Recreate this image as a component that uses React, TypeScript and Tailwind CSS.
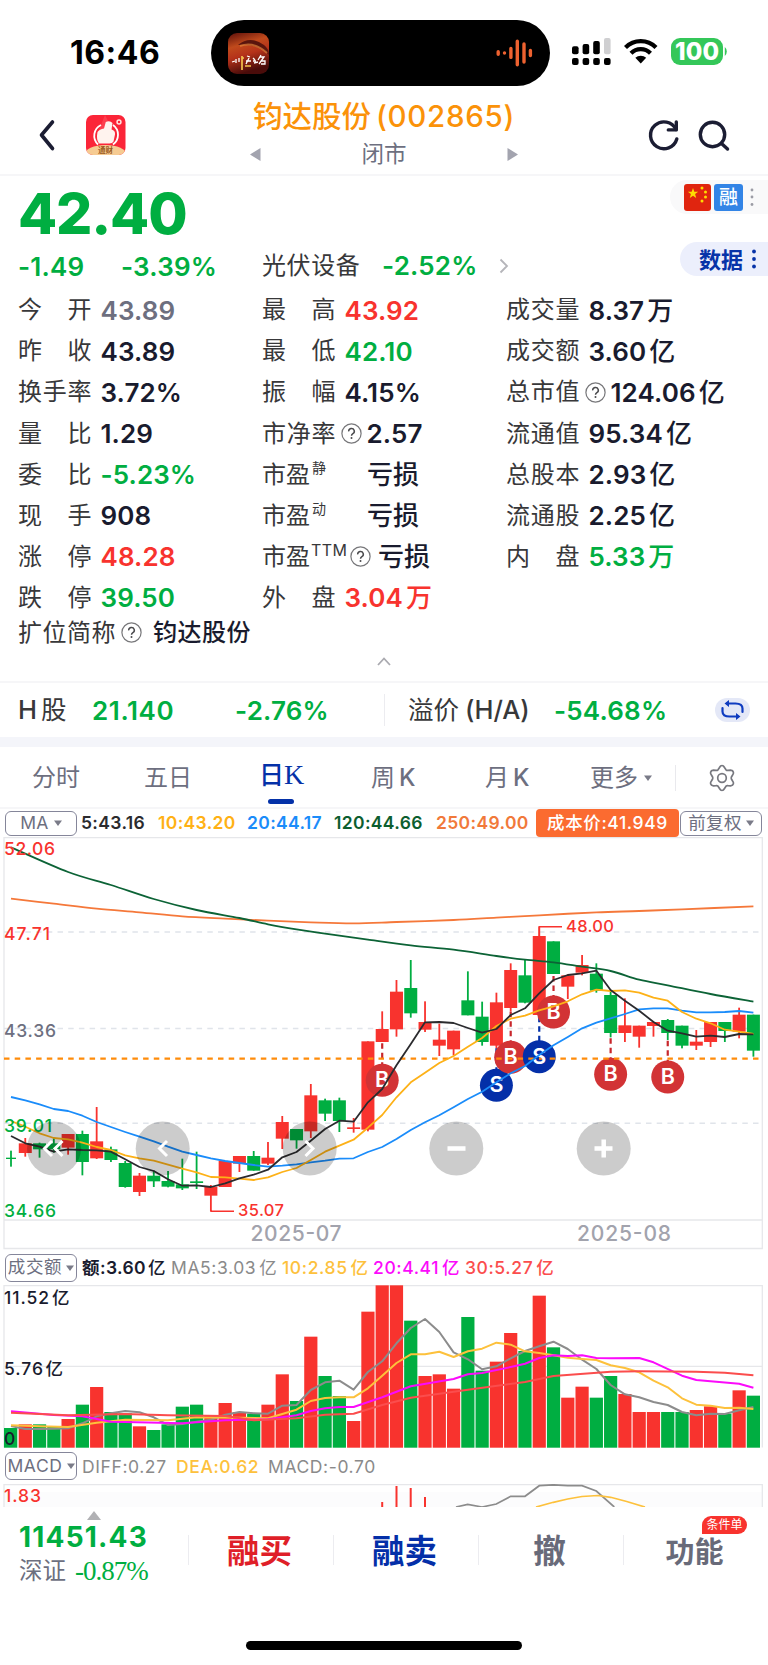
import React from "react";

type Candle = [string, number, number, number, number];
type Pt = [number, number];

const RED = "#f8332e";
const GREEN = "#00ae41";
const STEP = 14.277;
const X0 = 11;
const cx = (i: number) => X0 + i * STEP;

// Candles: colour, high, body top, body bottom, low (thirds of a pixel from the chart top)
const candles: Candle[] = [
  ["G", 962, 983, 987, 1010], ["R", 924, 940, 969, 980], ["G", 938, 940, 958, 983], ["G", 925, 940, 958, 968],
  ["R", 912, 912, 953, 974], ["G", 902, 912, 996, 1036], ["R", 831, 934, 985, 987], ["G", 950, 958, 990, 996],
  ["G", 993, 999, 1071, 1073], ["R", 1029, 1037, 1086, 1098], ["G", 1022, 1037, 1054, 1071], ["G", 1023, 1053, 1070, 1072],
  ["G", 986, 1063, 1075, 1080], ["G", 965, 1054, 1059, 1077], ["R", 1065, 1070, 1097, 1143], ["R", 993, 993, 1071, 1071],
  ["R", 978, 978, 1001, 1026], ["G", 963, 978, 1022, 1022], ["R", 936, 983, 1001, 1005], ["R", 858, 876, 926, 957],
  ["G", 897, 897, 931, 956], ["R", 762, 796, 904, 924], ["G", 806, 811, 851, 873], ["G", 803, 811, 873, 906],
  ["R", 864, 892, 897, 908], ["R", 634, 634, 899, 904], ["R", 544, 597, 636, 636], ["R", 450, 485, 598, 620],
  ["G", 390, 474, 550, 563], ["R", 514, 576, 599, 606], ["R", 581, 629, 647, 678], ["R", 602, 602, 658, 676],
  ["G", 424, 511, 556, 556], ["G", 515, 560, 636, 647], ["R", 488, 517, 647, 655], ["R", 400, 420, 534, 545],
  ["G", 390, 436, 518, 520], ["R", 290, 318, 555, 560], ["G", 334, 334, 432, 432], ["R", 433, 436, 470, 507],
  ["R", 375, 405, 428, 436], ["G", 400, 431, 482, 488], ["G", 486, 495, 609, 622], ["R", 505, 586, 609, 636],
  ["R", 587, 587, 620, 653], ["R", 575, 576, 588, 620], ["G", 567, 570, 609, 630], ["G", 587, 587, 647, 655],
  ["R", 600, 635, 647, 660], ["R", 576, 576, 636, 651], ["G", 576, 576, 603, 636], ["R", 533, 554, 605, 625],
  ["G", 554, 554, 662, 680],
];

const ma5 = [918, 940, 950, 965, 958, 960, 961, 965, 988, 1011, 1023, 1048, 1067, 1066, 1071, 1060, 1045, 1034, 1019, 982, 966, 932, 897, 872, 875, 817, 777, 706, 642, 577, 576, 579, 594, 608, 597, 555, 535, 490, 450, 435, 430, 422, 480, 512, 542, 576, 602, 610, 620, 617, 621, 612, 613];
const ma10 = [873, 890, 910, 924, 928, 938, 951, 960, 976, 985, 992, 1004, 1016, 1027, 1041, 1042, 1046, 1050, 1042, 1026, 1014, 990, 965, 947, 929, 893, 855, 802, 757, 728, 699, 678, 650, 624, 588, 566, 557, 541, 529, 514, 493, 479, 483, 481, 488, 503, 512, 546, 566, 580, 599, 605, 612];
const ma20 = [801, 811, 823, 837, 843, 857, 876, 891, 906, 920, 934, 950, 965, 975, 985, 993, 999, 1005, 1010, 1007, 1003, 997, 992, 986, 985, 966, 951, 927, 900, 877, 856, 832, 807, 785, 757, 730, 708, 675, 646, 621, 595, 578, 565, 552, 538, 535, 535, 542, 547, 547, 546, 543, 548];
const ma120: Pt[] = [[0, 52], [4, 126], [7, 165], [10, 207], [13, 240], [16, 264], [18, 283], [20, 298], [23, 317], [25, 329], [28, 346], [31, 359], [34, 378], [36, 389], [38, 397], [40, 410], [42, 423], [44, 449], [46, 466], [49, 492], [52, 515]];
const ma250: Pt[] = [[0, 206], [3, 221], [6, 236], [9, 247], [12, 259], [15, 266], [18, 272], [21, 277], [24, 280], [27, 276], [31, 270], [34, 263], [37, 256], [41, 247], [44, 243], [47, 238], [52, 229]];

const volTops = [549, 538, 538, 545, 522, 479, 426, 501, 505, 544, 555, 538, 485, 479, 513, 474, 501, 506, 479, 388, 468, 275, 393, 453, 528, 200, 121, 121, 227, 393, 388, 431, 216, 377, 350, 264, 318, 152, 307, 458, 425, 458, 393, 447, 501, 501, 501, 501, 495, 484, 506, 436, 452];
const vol5 = [543, 552, 552, 551, 550, 535, 514, 505, 498, 502, 517, 540, 537, 530, 524, 509, 501, 505, 506, 482, 480, 435, 412, 407, 434, 381, 349, 295, 249, 222, 261, 322, 343, 373, 364, 340, 318, 304, 290, 312, 344, 372, 420, 448, 457, 471, 480, 501, 511, 506, 507, 496, 486];
const vol10: Pt[] = [[0, 541], [2, 544], [4, 546], [6, 533], [8, 524], [11, 526], [13, 517], [16, 518], [18, 520], [20, 494], [21, 468], [22, 459], [23, 457], [24, 457], [25, 430], [26, 392], [27, 354], [28, 328], [29, 328], [30, 320], [31, 336], [32, 319], [33, 311], [34, 293], [35, 299], [36, 319], [37, 324], [38, 331], [39, 338], [40, 342], [41, 345], [42, 361], [43, 369], [44, 382], [45, 407], [46, 427], [47, 460], [48, 479], [49, 482], [50, 489], [51, 488], [52, 492]];
const vol20: Pt[] = [[0, 499], [3, 510], [5, 514], [6, 522], [7, 530], [8, 531], [12, 535], [15, 526], [18, 523], [20, 511], [21, 498], [22, 490], [23, 486], [24, 486], [26, 457], [28, 424], [31, 402], [32, 388], [33, 384], [35, 366], [36, 356], [37, 339], [38, 331], [39, 333], [40, 331], [41, 339], [42, 340], [44, 339], [45, 352], [47, 392], [48, 405], [51, 416], [52, 428]];
const vol30: Pt[] = [[0, 503], [4, 511], [8, 507], [11, 511], [15, 513], [17, 526], [20, 520], [22, 509], [24, 506], [26, 480], [28, 458], [32, 434], [36, 411], [38, 393], [42, 380], [44, 379], [48, 380], [50, 383], [52, 391]];

const seq = (a: number[]): Pt[] => a.map((y, i) => [i, y]);
const line = (p: Pt[]) => p.map(([i, y]) => `${cx(i).toFixed(1)},${(y / 3).toFixed(1)}`).join(" ");

// Smooth path through sparse points
function curve(p: Pt[]) {
  const q = p.map(([i, y]) => [cx(i), y / 3]);
  let d = `M${q[0][0]} ${q[0][1]}`;
  for (let k = 0; k < q.length - 1; k++) {
    const a = q[Math.max(0, k - 1)];
    const b = q[k];
    const c = q[k + 1];
    const e = q[Math.min(q.length - 1, k + 2)];
    d += `C${b[0] + (c[0] - a[0]) / 6} ${b[1] + (c[1] - a[1]) / 6} ${c[0] - (e[0] - b[0]) / 6} ${c[1] - (e[1] - b[1]) / 6} ${c[0]} ${c[1]}`;
  }
  return d;
}

const SANS = "Inter, 'Noto Sans CJK SC', sans-serif";

function Txt(p: { x: number; y: number; w?: number; size: number; fill: string; weight?: number; anchor?: "start" | "middle"; children: string }) {
  return (
    <text x={p.x} y={p.y} fontSize={p.size} fill={p.fill} fontWeight={p.weight ?? 500} fontFamily={SANS} textAnchor={p.anchor ?? "start"} textLength={p.w}>
      {p.children}
    </text>
  );
}

function Help() {
  return (
    <svg width="21" height="21" viewBox="0 0 21 21" fill="none" className="shrink-0">
      <circle cx="10.5" cy="10.5" r="9.6" stroke="#77777a" strokeWidth="1.2" />
      <path d="M7.7 8.4a2.8 2.8 0 1 1 4.2 2.3c-.9.6-1.4 1-1.4 2.1" stroke="#4a4a4d" strokeWidth="1.5" />
      <circle cx="10.5" cy="15" r="1" fill="#4a4a4d" />
    </svg>
  );
}

function Label({ text }: { text: string }) {
  return (
    <div className="flex w-[73.500px] shrink-0 justify-between text-[24px] text-[#38383a]">
      {text.split("").map((c, i) => (
        <span key={i}>{c}</span>
      ))}
    </div>
  );
}

const tone: Record<string, string> = {
  k: "text-[#191b2e]",
  g: "text-[#00ae41]",
  r: "text-[#f8332e]",
  s: "text-[#6d6f7f]",
};

function Value({ v, t = "k" }: { v: string; t?: string }) {
  const m = v.match(/^([-\d.%]*)(.*)$/)!;
  return (
    <div className={"flex items-center whitespace-nowrap text-[26px] " + tone[t]}>
      {m[1] && <span className="font-semibold tracking-[0.100px]">{m[1]}</span>}
      {m[2] && <span className={m[1] ? "ml-[3px] font-medium" : "font-medium"}>{m[2]}</span>}
    </div>
  );
}

function Stat({ l, v, t, help }: { l: string; v: string; t?: string; help?: boolean }) {
  return (
    <div className="flex h-[41.1px] items-center">
      <Label text={l} />
      {help ? (
        <div className="mr-[5px] ml-[5px] flex">
          <Help />
        </div>
      ) : (
        <div className="w-[9px]" />
      )}
      <Value v={v} t={t} />
    </div>
  );
}

function PE({ sup, v, help }: { sup: string; v: string; help?: boolean }) {
  return (
    <div className="flex h-[41.1px] items-center">
      <div className="w-[48px] text-[24px] whitespace-nowrap text-[#38383a]">市盈</div>
      <div className={help ? "mr-[5px] w-[33px] pb-[13px] pl-[1px] text-[16px] leading-none tracking-[0.4px] text-[#38383a]" : "mr-[35px] w-[22px] pb-[13px] pl-[2px] text-[14px] leading-none text-[#38383a]"}>{sup}</div>
      {help && (
        <div className="mr-[7px] ml-[2px] flex">
          <Help />
        </div>
      )}
      <Value v={v} />
    </div>
  );
}

function StatusBar() {
  return (
    <div className="flex h-[86px] items-start">
      <div className="mt-[32px] ml-[70px] w-[141px] text-[32px] leading-[42px] font-bold tracking-[0.5px] text-black">16:46</div>
      <div className="mt-[20px] flex h-[66px] w-[339px] items-center justify-between rounded-full bg-black pr-[17px] pl-[17px]">
        <svg width="41" height="41" viewBox="0 0 41 41">
          <defs>
            <linearGradient id="poster" x1="0" y1="0" x2="0.3" y2="1">
              <stop offset="0" stopColor="#5c0f0a" />
              <stop offset="0.35" stopColor="#c04a1c" />
              <stop offset="0.6" stopColor="#b5321a" />
              <stop offset="1" stopColor="#4a0c0a" />
            </linearGradient>
            <clipPath id="pclip">
              <rect width="41" height="41" rx="9" />
            </clipPath>
          </defs>
          <g clipPath="url(#pclip)">
            <rect width="41" height="41" fill="url(#poster)" />
            <path d="M10 12Q22 2 36 12Q41 16 41 22Q30 10 10 12Z" fill="#5a150d" />
            <path d="M12 13Q26 8 39 20" stroke="#e0813a" strokeWidth="2" fill="none" opacity="0.7" />
          </g>
          <path d="M4 29l3-1M8 26v4M11 25v4M19 23l3 1M18 28h5M21 25l-3 6M25 25l2 2M25 28l3 0M26 30l4-1M33 22l-3 5M32 24h4l-5 7M33 28h4v3h-4" stroke="#fff" strokeWidth="1.3" fill="none" />
          <path d="M14 23v14M14 25h2M17 33h6" stroke="#f3c24d" strokeWidth="1.7" />
        </svg>
        <svg width="37" height="28" viewBox="0 0 37 28" stroke="#ee6230" strokeWidth="3.4" strokeLinecap="round">
          <path d="M2.2 12.7v2.6M8.5 13.9v.2M14.9 9.5v8.9M21.3 2.3v23.4M28 5v18M34.4 11.5v5" />
        </svg>
      </div>
      <svg width="160" height="30" viewBox="0 0 160 30" className="mt-[37px] ml-[20px]">
        <g fill="#000">
          <rect x="2" y="9.300" width="6.600" height="8" rx="2" />
          <rect x="12.600" y="7" width="6.600" height="10.300" rx="2" />
          <rect x="23.200" y="4" width="6.600" height="13.300" rx="2" />
          <rect x="34" y="1" width="6.600" height="16.300" rx="2" fill="#cfcfd1" />
          <rect x="2" y="21" width="6.600" height="7" rx="2" />
          <rect x="12.600" y="21" width="6.600" height="7" rx="2" />
          <rect x="23.200" y="21" width="6.600" height="7" rx="2" />
          <rect x="34" y="21" width="6.600" height="7" rx="2" />
        </g>
        <g fill="none" stroke="#000" strokeWidth="4.200">
          <path d="M55.500 10.500a21.500 21.500 0 0 1 30.500 0" />
          <path d="M61 16.200a13.700 13.700 0 0 1 19.500 0" />
        </g>
        <path d="M65.300 20.800a8 8 0 0 1 10.900 0L70.750 26.500Z" fill="#000" />
        <rect x="101" y="1" width="52" height="27" rx="9" fill="#34c759" />
        <path d="M154.800 10v9q2-1.500 2-4.500t-2-4.500Z" fill="#34c759" />
        <text x="127" y="23.200" textAnchor="middle" fontSize="24" fontWeight="800" fill="#fff" fontFamily={SANS} textLength="44">100</text>
      </svg>
    </div>
  );
}

function Header() {
  return (
    <div className="flex h-[90px] border-b-2 border-[#f6f6f8]">
      <svg width="90" height="60" viewBox="0 0 90 60" className="mt-[19px] ml-[37px]">
        <path d="M15.500 17L4.500 30L15.500 43.500" fill="none" stroke="#1b1d33" strokeWidth="3.600" strokeLinecap="round" strokeLinejoin="round" />
        <defs>
          <clipPath id="lc">
            <rect x="49" y="10" width="39.500" height="40" rx="7" />
          </clipPath>
        </defs>
        <g clipPath="url(#lc)">
          <rect x="49" y="10" width="40" height="40" fill="#fb2538" />
          <path d="M68 10l-8 20h18Z" fill="#ff5a64" opacity="0.5" />
          <ellipse cx="68.500" cy="49.500" rx="21" ry="9.500" fill="#f6cb92" />
        </g>
        <g transform="translate(1 0)">
          <path d="M60 39.500a12 12 0 0 1 3-19.500M75 20a12 12 0 0 1 0 19.500" stroke="#fff" strokeWidth="1.800" fill="none" />
          <path d="M59.500 27q2-3 6.500-3.500l1.800-6.500q4-2 6.700 1l-1 6.500q4 1 3.500 5l-1.500 7q-1 2-4 2h-10.500q-3-4-1.500-11.500Z" fill="#fff3ee" />
          <circle cx="81" cy="17" r="2.700" fill="#ffe3e0" />
          <circle cx="81" cy="17" r="1.200" fill="#fb2538" />
          <text x="67.500" y="48" textAnchor="middle" fontSize="7.500" fontWeight="700" fill="#9a5a20" fontFamily={SANS}>通财</text>
        </g>
      </svg>
      <div className="ml-[123px] flex w-[268px] flex-col items-center">
        <div className="mt-[10px] text-[29.500px] leading-[40px] whitespace-nowrap text-[#fb9209]">
          <span className="font-medium">钧达股份</span>
          <span className="ml-[5px] font-medium tracking-[0.700px]">(002865)</span>
        </div>
        <div className="mt-[2px] flex h-[32px] w-[268px] items-center justify-between">
          <svg width="11" height="13" viewBox="0 0 11 13"><path d="M10.500 0v13L0 6.500Z" fill="#a3a4af" /></svg>
          <div className="text-[22.500px] leading-[30px] text-[#6d6f7f]">闭市</div>
          <svg width="11" height="13" viewBox="0 0 11 13"><path d="M.5 0v13L11 6.500Z" fill="#a3a4af" /></svg>
        </div>
      </div>
      <svg width="86" height="40" viewBox="0 0 86 40" className="mt-[29px] ml-[128px]" fill="none" stroke="#1b1d33" strokeWidth="3.400" strokeLinecap="round">
        <path d="M30 14.500A13.400 13.400 0 1 0 30.800 24" />
        <path d="M30.300 7v7.900h-8" strokeLinejoin="round" />
        <circle cx="66.500" cy="19.500" r="12.200" />
        <path d="M75.500 28.500L81.500 34" />
      </svg>
    </div>
  );
}

function Quote() {
  return (
    <div className="relative h-[505px]">
      <div className="flex h-[67px]">
        <div className="mt-[8px] ml-[18px] text-[57px] leading-[60px] font-extrabold tracking-[-1.200px] text-[#00ae41]">42.40</div>
      </div>
      <div className="flex h-[46px] items-center text-[26px] font-semibold text-[#00ae41]">
        <div className="ml-[18px] w-[103px] tracking-[0.200px]">-1.49</div>
        <div className="w-[141px] tracking-[0.200px]">-3.39%</div>
        <div className="w-[120px] text-[24px] font-normal tracking-[0.600px] whitespace-nowrap text-[#38383a]">光伏设备</div>
        <div className="w-[117px] pb-[2px] tracking-[0.200px]">-2.52%</div>
        <svg width="10" height="16" viewBox="0 0 10 16" fill="none" stroke="#b5b5ba" strokeWidth="1.800"><path d="M1.500 1.500L8 8L1.500 14.500" /></svg>
      </div>
      <div className="mt-[0.700px] flex pl-[18px]">
        <div className="w-[244px]">
          <Stat l="今 开" v="43.89" t="s" />
          <Stat l="昨 收" v="43.89" />
          <Stat l="换手率" v="3.72%" />
          <Stat l="量 比" v="1.29" />
          <Stat l="委 比" v="-5.23%" t="g" />
          <Stat l="现 手" v="908" />
          <Stat l="涨 停" v="48.28" t="r" />
          <Stat l="跌 停" v="39.50" t="g" />
        </div>
        <div className="w-[244px]">
          <Stat l="最 高" v="43.92" t="r" />
          <Stat l="最 低" v="42.10" t="g" />
          <Stat l="振 幅" v="4.15%" />
          <Stat l="市净率" v="2.57" help />
          <PE sup="静" v="亏损" />
          <PE sup="动" v="亏损" />
          <PE sup="TTM" v="亏损" help />
          <Stat l="外 盘" v="3.04万" t="r" />
        </div>
        <div>
          <Stat l="成交量" v="8.37万" />
          <Stat l="成交额" v="3.60亿" />
          <Stat l="总市值" v="124.06亿" help />
          <Stat l="流通值" v="95.34亿" />
          <Stat l="总股本" v="2.93亿" />
          <Stat l="流通股" v="2.25亿" />
          <Stat l="内 盘" v="5.33万" t="g" />
        </div>
      </div>
      <div className="-mt-[1.500px] flex h-[32px] items-center pl-[18px] text-[24px]">
        <div className="w-[103px] tracking-[0.500px] text-[#38383a]">扩位简称</div>
        <Help />
        <div className="ml-[11px] font-medium tracking-[0.500px] text-[#191b2e]">钧达股份</div>
      </div>
      <div className="flex justify-center pt-[8px]">
        <svg width="14" height="9" viewBox="0 0 14 9" fill="none" stroke="#aaaab0" strokeWidth="1.800"><path d="M1 8L7 1.500L13 8" /></svg>
      </div>
      <div className="absolute top-[4px] right-0 flex h-[34px] w-[98px] items-center rounded-l-full bg-[#f9f9fa] pl-[14px]">
        <svg width="27" height="27" viewBox="0 0 27 27">
          <rect width="27" height="27" rx="3" fill="#e0250f" />
          <path d="M9 4l1.300 3.700h3.900l-3.100 2.400 1.100 3.800L9 11.700l-3.200 2.200 1.100-3.800-3.100-2.400h3.900Z" fill="#fddc02" />
          <g fill="#fddc02"><circle cx="18" cy="4" r="1.500" /><circle cx="21.500" cy="8" r="1.500" /><circle cx="21.500" cy="13" r="1.500" /><circle cx="18" cy="17" r="1.500" /></g>
        </svg>
        <div className="ml-[3px] flex h-[27px] w-[29px] items-center justify-center rounded-[3px] bg-[#3284e6] text-[19px] leading-none font-medium text-white">融</div>
        <svg width="4" height="20" viewBox="0 0 4 20" className="ml-[7px]" fill="#9b9ca5"><circle cx="2" cy="3" r="1.400" /><circle cx="2" cy="10" r="1.400" /><circle cx="2" cy="17.500" r="1.400" /></svg>
      </div>
      <div className="absolute top-[66px] right-0 flex h-[34px] w-[88px] items-center rounded-l-full bg-[#eceffc] pl-[19px] text-[22px] leading-none font-bold text-[#0733a8]">
        <span className="pt-[2px]">数据</span>
        <svg width="4" height="20" viewBox="0 0 4 20" className="ml-[9px]" fill="#0733a8"><circle cx="2" cy="2.500" r="1.900" /><circle cx="2" cy="10" r="1.900" /><circle cx="2" cy="17.500" r="1.900" /></svg>
      </div>
    </div>
  );
}

function HShare() {
  return (
    <div className="flex h-[56px] items-center border-t-2 border-[#f6f6f8] text-[26px] font-semibold text-[#00ae41]">
      <div className="ml-[18px] w-[74px] text-[25.500px] font-medium whitespace-nowrap text-[#38383a]">H<span className="ml-[4px] font-normal">股</span></div>
      <div className="w-[143px] tracking-[0.600px]">21.140</div>
      <div className="w-[149px] tracking-[0.200px]">-2.76%</div>
      <div className="h-[32px] w-px bg-[#ececf0]" />
      <div className="ml-[23px] w-[146px] text-[25.500px] font-medium whitespace-nowrap text-[#38383a]"><span className="font-normal">溢价</span><span className="ml-[6px]">(H/A)</span></div>
      <div className="w-[161px] tracking-[0.200px]">-54.68%</div>
      <svg width="35" height="24" viewBox="0 0 35 24" fill="none">
        <rect width="35" height="24" rx="12" fill="#e4e8f7" />
        <path d="M12 5.500H20.500Q27.500 5.500 27.500 10.500V14M23 18.500H14.500Q7.500 18.500 7.500 13.500V10" stroke="#0f3cc0" strokeWidth="2.200" strokeLinecap="round" />
        <path d="M14 2V9L9.500 5.500ZM21 15V22L25.500 18.500Z" fill="#0f3cc0" />
      </svg>
    </div>
  );
}

const Caret = ({ c = "" }: { c?: string }) => (
  <svg width="8" height="6" viewBox="0 0 8 6" className={c}><path d="M0 .5H8L4 6Z" fill="#7a7b88" /></svg>
);

function Tabs() {
  return (
    <div className="flex h-[62px] border-b-2 border-[#f6f6f8] text-[24px] text-[#6d6f7f]">
      <div className="mt-[13px] ml-[32px] w-[112px] leading-[36px]">分时</div>
      <div className="mt-[13px] w-[115px] leading-[36px]">五日</div>
      <div className="mt-[9px] w-[112px] text-[25px] font-medium text-[#0431a8]">
        <div className="flex leading-[38px]">日<span className="font-['Liberation_Serif'] text-[28px]">K</span></div>
        <div className="mt-[5px] ml-[9px] h-[5px] w-[26px] rounded-full bg-[#0431a8]" />
      </div>
      <div className="mt-[13px] w-[114px] leading-[36px]">周<span className="ml-[4px] font-medium">K</span></div>
      <div className="mt-[13px] w-[105px] leading-[36px]">月<span className="ml-[4px] font-medium">K</span></div>
      <div className="mt-[13px] flex h-[36px] w-[85px] items-center leading-[36px]">更多<Caret c="ml-[6px]" /></div>
      <div className="mt-[18px] h-[26px] w-px bg-[#e9e9ed]" />
      <svg width="28" height="28" viewBox="0 0 28 28" fill="none" stroke="#77787f" strokeWidth="1.700" strokeLinejoin="round" className="mt-[17px] ml-[32px]">
        <path d="M14 1.500Q15.500 1.500 16.500 3.500L18 5.800Q18.800 6.600 20 6.400L22.600 6.200Q25 6.500 25.400 8.200Q25.700 9.500 24.600 11L23.400 13Q23 14 23.400 15L24.600 17Q25.700 18.500 25.400 19.800Q25 21.500 22.600 21.800L20 21.600Q18.800 21.400 18 22.200L16.500 24.500Q15.500 26.500 14 26.500Q12.500 26.500 11.500 24.500L10 22.200Q9.200 21.400 8 21.600L5.400 21.800Q3 21.500 2.600 19.800Q2.300 18.500 3.400 17L4.600 15Q5 14 4.600 13L3.400 11Q2.300 9.500 2.600 8.200Q3 6.500 5.400 6.200L8 6.400Q9.200 6.600 10 5.800L11.500 3.500Q12.500 1.500 14 1.500Z" />
        <circle cx="14" cy="14" r="4.300" />
      </svg>
    </div>
  );
}

function MaRow() {
  return (
    <div className="flex h-[28px] items-center text-[17.500px] font-semibold tracking-[0.350px] whitespace-nowrap">
      <div className="mr-[4px] ml-[5px] flex h-[25px] w-[72px] items-center justify-center rounded-[6px] border-[1.500px] border-[#85869a] font-normal text-[#6d6f7f]">MA<Caret c="ml-[5px]" /></div>
      <div className="w-[77px] text-[#2b2b2e]">5:43.16</div>
      <div className="w-[89px] text-[#ffb114]">10:43.20</div>
      <div className="w-[87px] text-[#1a8cfa]">20:44.17</div>
      <div className="w-[102px] text-[#0c5e2f]">120:44.66</div>
      <div className="w-[100px] text-[#f1793a]">250:49.00</div>
      <div className="flex h-[28px] w-[143px] items-center justify-center rounded-[4px] bg-[#fb6b30] font-medium tracking-[0.600px] text-white">成本价:41.949</div>
      <div className="ml-[1px] flex h-[25px] w-[82px] items-center justify-center rounded-[6px] border-[1.500px] border-[#85869a] font-normal text-[#6d6f7f]">前复权<Caret c="ml-[4px]" /></div>
    </div>
  );
}

const markers: [string, number, number, number][] = [
  ["S", 34, 766, 655], ["B", 35, 682, 545], ["S", 37, 680, 560], ["B", 26, 751, 640],
  ["B", 38, 546, 438], ["B", 42, 733, 625], ["B", 46, 741, 632],
];

function PriceChart() {
  return (
    <svg width="768" height="413" viewBox="0 0 768 413" className="block">
      <g transform="translate(0,-7)">
        <path d="M4 412V7.500H762.300V418.500H4ZM4 390H762" fill="none" stroke="#e6e7ea" strokeWidth="1.300" />
        <path d="M4 102H762M4 198.500H762M4 293.300H762" stroke="#e0e4ea" strokeWidth="1.600" strokeDasharray="5.500 5.200" />
        {candles.map(([c, h, t, b, l], i) => (
          <g key={i} fill={c === "R" ? RED : GREEN}>
            <rect x={cx(i) - 0.9} y={h / 3} width="1.800" height={(l - h) / 3} />
            <rect x={i === 0 ? 6 : cx(i) - 6.500} y={t / 3} width={i === 0 ? 10 : 13} height={(b - t) / 3} />
          </g>
        ))}
        <path d="M211 380V381.200H234M539.300 108V96.700H562" fill="none" stroke={RED} strokeWidth="1.500" />
        {markers.map(([k, i, y, s]) => (
          <g key={`${k}${i}`}>
            <path d={`M${cx(i)} ${s / 3}V${y / 3 - 14}`} stroke={k === "B" ? "#c8262b" : "#0431a8"} strokeWidth="2.200" strokeDasharray="5.500 4" />
            <circle cx={cx(i)} cy={y / 3} r="16.500" fill={k === "B" ? "#d23335" : "#042fa8"} />
          </g>
        ))}
        <path d="M4 228.700H762" stroke="#ff8c0a" strokeWidth="2.200" strokeDasharray="5.500 5.200" />
        {markers.map(([k, i, y]) => (
          <Txt key={`t${k}${i}`} x={cx(i)} y={y / 3 + 7} size={21.500} fill="#fff" weight={600} anchor="middle">{k}</Txt>
        ))}
        <g fill="none" strokeWidth="1.800" strokeLinejoin="round">
          <path d={curve(ma250)} stroke="#f5783a" />
          <path d={curve(ma120)} stroke="#0c6336" />
          <polyline points={line(seq(ma20))} stroke="#1a8cfa" />
          <polyline points={line(seq(ma10))} stroke="#fdb117" />
          <polyline points={line(seq(ma5))} stroke="#2b2b2e" />
        </g>
        <Txt x={4} y={24.500} w={51} size={17.500} fill={RED}>52.06</Txt>
        <Txt x={4} y={110} w={46} size={17.500} fill={RED}>47.71</Txt>
        <Txt x={4} y={207} w={52} size={17.500} fill="#6d6f7f">43.36</Txt>
        <Txt x={4} y={301.500} w={48} size={17.500} fill={GREEN}>39.01</Txt>
        <Txt x={4} y={387} w={52} size={17.500} fill={GREEN}>34.66</Txt>
        <Txt x={238} y={386} w={46} size={16.500} fill={RED}>35.07</Txt>
        <Txt x={566} y={102} w={48} size={16.500} fill={RED}>48.00</Txt>
        <Txt x={250.500} y={411} w={91} size={21} fill="#a2a3ad">2025-07</Txt>
        <Txt x={577} y={411} w={94} size={21} fill="#a2a3ad">2025-08</Txt>
        {[54, 162.700, 309.700, 456.300, 603.700].map((x) => (
          <circle key={x} cx={x} cy="318.500" r="27" fill="#000" fillOpacity="0.2" />
        ))}
        <g fill="none" stroke="#fff" strokeWidth="3">
          <path d="M52 311L44.500 318.500L52 326M62.500 311L55 318.500L62.500 326M167 311L159.500 318.500L167 326M305.500 311L313 318.500L305.500 326" />
          <path d="M447.500 318.500H465.500M594.500 318.500H612.500M603.700 309.500V327.500" strokeWidth="4.500" />
        </g>
      </g>
    </svg>
  );
}

function IndicatorBox({ children }: { children: string }) {
  return (
    <div className="mr-[5px] ml-[5px] flex h-[28px] w-[72px] shrink-0 items-center justify-center rounded-[6px] border-[1.500px] border-[#85869a] text-[17.500px] font-normal text-[#6d6f7f]">
      {children}
      <Caret c="ml-[4px]" />
    </div>
  );
}

function VolumeHeader() {
  return (
    <div className="flex h-[35px] items-center text-[17.500px] font-medium tracking-[0.600px] whitespace-nowrap">
      <IndicatorBox>成交额</IndicatorBox>
      <div className="w-[89px] pt-[2px] font-semibold tracking-[0.400px] text-[#191b2e]">额:3.60<span className="ml-[2px] font-medium">亿</span></div>
      <div className="w-[111px] pt-[2px] font-normal text-[#8a8a8a]">MA5:3.03<span className="ml-[3px]">亿</span></div>
      <div className="w-[91px] pt-[2px] text-[#fdc13c]">10:2.85<span className="ml-[3px]">亿</span></div>
      <div className="w-[92px] pt-[2px] text-[#fb0bfb]">20:4.41<span className="ml-[3px]">亿</span></div>
      <div className="pt-[2px] text-[#fb4d4d]">30:5.27<span className="ml-[3px]">亿</span></div>
    </div>
  );
}

function VolumeChart() {
  return (
    <svg width="768" height="163" viewBox="0 0 768 163" className="block">
      <g transform="translate(0,-40)">
        <path d="M4 202.500V40.700H762.300V202.500M4 121.300H762" fill="none" stroke="#e6e7ea" strokeWidth="1.300" />
        {volTops.map((t, i) => (
          <rect key={i} x={i === 0 ? 4 : cx(i) - 6.600} y={t / 3} width={i === 0 ? 13.300 : 13.200} height={202.700 - t / 3} fill={candles[i][0] === "R" ? RED : GREEN} />
        ))}
        <g fill="none" strokeWidth="2" strokeLinejoin="round">
          <polyline points={line(seq(vol5))} stroke="#8c8c8c" />
          <polyline points={line(vol10)} stroke="#fdc13c" />
          <polyline points={line(vol20)} stroke="#fb0bfb" />
          <polyline points={line(vol30)} stroke="#fb4d4d" />
        </g>
        <Txt x={4} y={58.500} w={45} size={17.500} fill="#191b2e">11.52</Txt>
        <Txt x={52} y={58.500} size={17.500} fill="#191b2e">亿</Txt>
        <Txt x={4} y={130.300} w={39} size={17.500} fill="#191b2e">5.76</Txt>
        <Txt x={45.500} y={130.300} size={17.500} fill="#191b2e">亿</Txt>
        <Txt x={4} y={200} size={17.500} fill="#191b2e">0</Txt>
      </g>
    </svg>
  );
}

function MacdHeader() {
  return (
    <div className="flex h-[36px] items-center text-[17.500px] tracking-[0.600px] whitespace-nowrap text-[#8a8a8a]">
      <IndicatorBox>MACD</IndicatorBox>
      <div className="w-[94px] pt-[2px]">DIFF:0.27</div>
      <div className="w-[92px] pt-[2px] font-medium text-[#fdc13c]">DEA:0.62</div>
      <div className="pt-[2px]">MACD:-0.70</div>
    </div>
  );
}

function MacdChart() {
  return (
    <svg width="768" height="23" viewBox="0 0 768 23" className="block">
      <rect x="4" y="8" width="758" height="15" fill="#fcfcfd" />
      <path d="M4 23V.7H762.300V23" fill="none" stroke="#e6e7ea" strokeWidth="1.300" />
      <path d="M382.200 18V23M396.500 2V23M410.700 4V23M425 13V23" stroke={RED} strokeWidth="2" />
      <g fill="none" strokeWidth="1.700">
        <path d="M456 23L467.700 20.300L482 23L496.300 20L510.700 12.300H525L539.300 1.700L553.300 .8L567.700 1.700H582L596.300 7L614.300 23" stroke="#8c8c8c" />
        <path d="M536 23L553.300 18.300L567.700 15L582 12.500L598 11.500L610.700 13.300L626.700 17.500L645 23" stroke="#fdc13c" />
      </g>
      <Txt x={4} y={18} w={37} size={17.500} fill={RED}>1.83</Txt>
    </svg>
  );
}

function BottomBar() {
  return (
    <div className="relative flex h-[158px] bg-white">
      <div className="w-[188px] pl-[19px]">
        <svg width="14" height="9" viewBox="0 0 14 9" className="mt-[4px] ml-[68px] block"><path d="M7 0L14 9H0Z" fill="#b1b1b4" /></svg>
        <div className="mt-[1px] text-[28px] leading-[32px] font-bold tracking-[1.200px] text-[#00ae41]">11451.43</div>
        <div className="mt-[2px] flex items-center text-[23.500px] leading-[32px] text-[#6d6f7f]">
          深证<span className="ml-[9px] font-['Liberation_Serif'] text-[27px] tracking-[-1px] text-[#00ae41]">-0.87%</span>
        </div>
      </div>
      {[
        ["融买", "text-[#df1f28] text-[32.500px] font-bold"],
        ["融卖", "text-[#042fa8] text-[32.500px] font-bold"],
        ["撤", "text-[#686a79] text-[32.500px] font-bold"],
        ["功能", "text-[#686a79] text-[29px] font-bold"],
      ].map(([t, c]) => (
        <div key={t} className="mt-[28px] flex h-[30px] w-[145px] items-center justify-center border-l border-[#ececf0]">
          <span className={c + " pt-[5px] pr-[3px] leading-none"}>{t}</span>
        </div>
      ))}
      <div className="absolute top-[9px] left-[702px] flex h-[18px] w-[45px] items-center justify-center rounded-[9px] rounded-bl-none bg-[#f8332e] text-[12px] leading-none text-white">条件单</div>
      <div className="absolute top-[134px] left-[246px] h-[9px] w-[276px] rounded-full bg-black" />
    </div>
  );
}

export default function App() {
  return (
    <div className="h-[1665px] w-[768px] overflow-hidden bg-white font-[Inter,'Noto_Sans_CJK_SC',sans-serif]">
      <StatusBar />
      <Header />
      <Quote />
      <HShare />
      <div className="h-[10px] bg-[#f4f5fa]" />
      <Tabs />
      <MaRow />
      <PriceChart />
      <VolumeHeader />
      <VolumeChart />
      <MacdHeader />
      <MacdChart />
      <BottomBar />
    </div>
  );
}
